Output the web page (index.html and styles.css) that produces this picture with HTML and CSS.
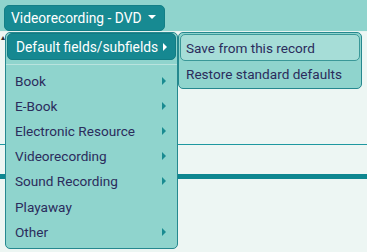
FILE: index.html
```html
<!DOCTYPE html>
<html>
<head>
<meta charset="utf-8">
<link rel="stylesheet" href="styles.css">
</head>
<body>
<div class="topbar">
  <button class="btn">Videorecording - DVD<span class="caret"></span></button>
</div>
<div class="content">
  <div class="mark">&#9652;</div>
  <div class="thin"></div>
  <div class="thick"></div>
</div>

<div class="menu">
  <div class="item active">Default fields/subfields <span class="arr"></span></div>
  <div class="sep"></div>
  <div class="item">Book <span class="arr"></span></div>
  <div class="item">E-Book <span class="arr"></span></div>
  <div class="item">Electronic Resource <span class="arr"></span></div>
  <div class="item">Videorecording <span class="arr"></span></div>
  <div class="item">Sound Recording <span class="arr"></span></div>
  <div class="item">Playaway</div>
  <div class="item">Other <span class="arr"></span></div>
</div>

<div class="submenu">
  <div class="sitem hover">Save from this record</div>
  <div class="sitem">Restore standard defaults</div>
</div>
</body>
</html>
```
FILE: styles.css
```css
html, body {
  margin: 0;
  padding: 0;
}
body {
  width: 367px;
  height: 252px;
  overflow: hidden;
  background: #edf6f3;
  font-family: Roboto, "Noto Sans", sans-serif;
  font-size: 13.6px;
  color: #2b2c5c;
  position: relative;
}
.topbar {
  height: 32px;
  background: #8fd4cd;
  border-bottom: 1px solid #e6f3f0;
  box-sizing: border-box;
  padding: 5px 0 0 4px;
}
.btn {
  display: flex;
  align-items: center;
  height: 26px;
  margin: 0;
  padding: 0 8px 0 6px;
  border: 1px solid #137f86;
  border-radius: 5px;
  background: #178a92;
  color: #fff;
  font-family: Roboto, "Noto Sans", sans-serif;
  font-size: 13.8px;
}
.caret {
  display: inline-block;
  width: 0;
  height: 0;
  border-left: 4px solid transparent;
  border-right: 4px solid transparent;
  border-top: 4px solid #fff;
  margin-left: 6px;
  margin-top: -2px;
}
.mark {
  height: 112px;
  font-size: 8px;
  line-height: 8px;
  padding-left: 1px;
  padding-top: 2px;
  box-sizing: border-box;
  color: #333;
}
.thin {
  height: 1px;
  background: #1e98a0;
}
.thick {
  height: 5px;
  margin-top: 29px;
  background: #0e8790;
}
.menu {
  position: absolute;
  left: 5px;
  top: 32px;
  width: 173px;
  height: 217px;
  box-sizing: border-box;
  background: #8fd4cd;
  border: 1px solid #25888f;
  border-radius: 5px;
  padding: 0 1px;
}
.item {
  display: flex;
  align-items: center;
  justify-content: space-between;
  height: 25.2px;
  padding: 0 10px 0 8px;
  box-sizing: border-box;
}
.item.active {
  height: 27px;
  background: #168891;
  color: #fff;
  border: 1px solid #127c84;
  border-radius: 5px;
  font-size: 13.8px;
  padding: 0 8px 0 8px;
}
.sep {
  height: 1px;
  margin: 4px -1px 3px;
  background: #b9e3de;
}
.arr {
  display: inline-block;
  width: 0;
  height: 0;
  border-top: 4px solid transparent;
  border-bottom: 4px solid transparent;
  border-left: 4px solid #1a8b91;
}
.active .arr {
  border-left-color: #fff;
}
.submenu {
  position: absolute;
  left: 178px;
  top: 32px;
  width: 184px;
  height: 57px;
  box-sizing: border-box;
  background: #8fd4cd;
  border: 1px solid #25888f;
  border-radius: 5px;
  padding: 1px;
}
.sitem {
  height: 25px;
  display: flex;
  align-items: center;
  padding: 0 6px;
  box-sizing: border-box;
}
.sitem.hover {
  height: 27px;
  background: #a6ddd7;
  border: 1px solid #3a9898;
  border-radius: 5px;
  padding: 0 5px;
}
```
